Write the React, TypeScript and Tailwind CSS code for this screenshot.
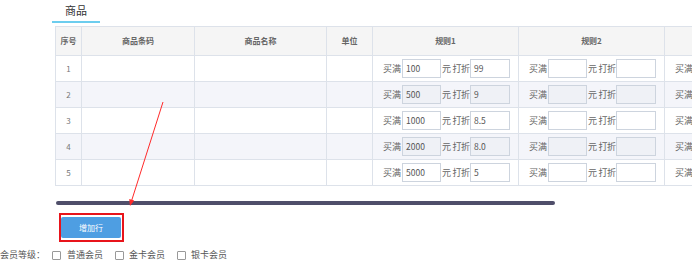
import React from "react";

const rules = [
  { buy: "100", off: "99" },
  { buy: "500", off: "9" },
  { buy: "1000", off: "8.5" },
  { buy: "2000", off: "8.0" },
  { buy: "5000", off: "5" },
];

function RuleCell({ buy, off, even }: { buy?: string; off?: string; even: boolean }) {
  const inputCls = `h-[19px] border border-[#cdd4de] px-[3px] text-[8.5px] text-[#555] leading-[17px] ${
    even ? "bg-[#eff1f6]" : "bg-white"
  }`;
  return (
    <td className="border border-[#dde2ea] pl-[10px] text-[9px] text-[#666]">
      <div className="flex items-center whitespace-nowrap">
        <span className="w-[19px]">买满</span>
        <div className={`${inputCls} w-[39px]`}>{buy}</div>
        <span className="w-[29px] pl-[1px] tracking-[-0.3px]">元 打折</span>
        <div className={`${inputCls} w-[40px]`}>{off}</div>
      </div>
    </td>
  );
}

export default function App() {
  return (
    <div
      className="relative w-[692px] h-[261px] overflow-hidden bg-white"
      style={{ fontFamily: '"Noto Sans CJK SC", "Noto Sans", sans-serif' }}
    >
      <div className="pl-[52px]">
        {/* Tab */}
        <div className="flex h-[23px] w-[48px] items-center justify-center border-b-2 border-[#6ccdee] text-[11px] text-[#333]">
          商品
        </div>

        {/* Table */}
        <div className="ml-[3px] mt-[3px] overflow-hidden">
          <table className="table-fixed border-collapse w-[901px]">
            <colgroup>
              <col className="w-[26px]" />
              <col className="w-[113px]" />
              <col className="w-[132px]" />
              <col className="w-[46px]" />
              <col className="w-[146px]" />
              <col className="w-[146px]" />
              <col className="w-[146px]" />
              <col className="w-[146px]" />
            </colgroup>
            <thead>
              <tr className="h-[29px] bg-[#f5f5f5] text-[8px] font-semibold text-[#666]">
                <th className="border border-[#dde2ea] font-semibold">序号</th>
                <th className="border border-[#dde2ea] font-semibold">商品条码</th>
                <th className="border border-[#dde2ea] font-semibold">商品名称</th>
                <th className="border border-[#dde2ea] font-semibold">单位</th>
                <th className="border border-[#dde2ea] font-semibold">规则1</th>
                <th className="border border-[#dde2ea] font-semibold">规则2</th>
                <th className="border border-[#dde2ea] font-semibold">规则3</th>
                <th className="border border-[#dde2ea] font-semibold">规则4</th>
              </tr>
            </thead>
            <tbody>
              {rules.map((r, i) => {
                const even = i % 2 === 1;
                return (
                  <tr key={i} className={`h-[26px] ${even ? "bg-[#f4f5fa]" : "bg-white"}`}>
                    <td className="border border-[#dde2ea] text-center text-[8px] text-[#777]">{i + 1}</td>
                    <td className="border border-[#dde2ea]" />
                    <td className="border border-[#dde2ea]" />
                    <td className="border border-[#dde2ea]" />
                    <RuleCell buy={r.buy} off={r.off} even={even} />
                    <RuleCell even={even} />
                    <RuleCell even={even} />
                    <RuleCell even={even} />
                  </tr>
                );
              })}
            </tbody>
          </table>
        </div>

        {/* Scrollbar thumb */}
        <div className="ml-[4px] mt-[15px] h-[4px] w-[499px] rounded-full bg-[#4f4e6a]" />

        {/* Add row button */}
        <div className="ml-[7px] mt-[8px] flex h-[29px] w-[65px] items-center border-2 border-[#e8141b]">
          <button className="h-[21px] w-[60px] rounded-[2px] bg-[#4e9ee2] text-[8px] text-white">增加行</button>
        </div>
      </div>

      {/* Member level */}
      <div className="mt-[6px] flex h-[14px] items-center text-[9px] text-[#555]">
        <span>会员等级：</span>
        <span className="ml-[7px] h-[9px] w-[9px] rounded-[1px] border border-[#999] bg-white" />
        <span className="ml-[6px]">普通会员</span>
        <span className="ml-[12px] h-[9px] w-[9px] rounded-[1px] border border-[#999] bg-white" />
        <span className="ml-[5px]">金卡会员</span>
        <span className="ml-[12px] h-[9px] w-[9px] rounded-[1px] border border-[#999] bg-white" />
        <span className="ml-[5px]">银卡会员</span>
      </div>

      {/* Annotation arrow */}
      <svg className="pointer-events-none absolute left-0 top-0" width="692" height="261">
        <line x1="163" y1="102" x2="131.5" y2="201" stroke="#ff2a2a" strokeWidth="1" />
        <polygon points="130,206 134.2,200.6 129.2,199" fill="#ff2a2a" />
      </svg>
    </div>
  );
}
